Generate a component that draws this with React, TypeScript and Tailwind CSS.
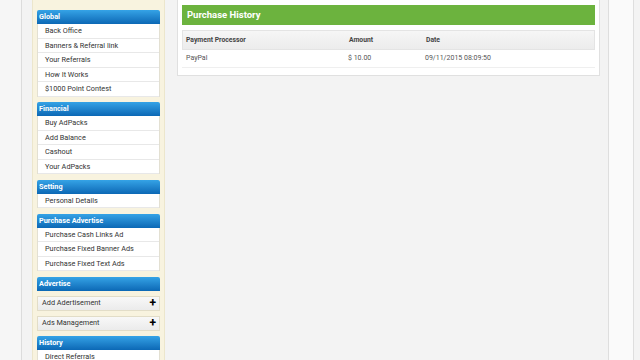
import React from 'react';

type Section = { title: string; items?: string[]; toggles?: string[] };

const sections: Section[] = [
  { title: 'Global', items: ['Back Office', 'Banners & Referral link', 'Your Referrals', 'How It Works', '$1000 Point Contest'] },
  { title: 'Financial', items: ['Buy AdPacks', 'Add Balance', 'Cashout', 'Your AdPacks'] },
  { title: 'Setting', items: ['Personal Details'] },
  { title: 'Purchase Advertise', items: ['Purchase Cash Links Ad', 'Purchase Fixed Banner Ads', 'Purchase Fixed Text Ads'] },
  { title: 'Advertise', toggles: ['Add Adertisement', 'Ads Management'] },
  { title: 'History', items: ['Direct Referrals', 'Purchase History'] },
];

function Header({ title }: { title: string }) {
  return (
    <div className="h-[14px] rounded-t-[2px] bg-gradient-to-b from-[#35a3e6] to-[#0b68b5] pl-[2px] text-[7.3px] font-bold leading-[14px] text-white">
      {title}
    </div>
  );
}

function SideSection({ s }: { s: Section }) {
  return (
    <div className="mb-[5.5px]">
      <Header title={s.title} />
      {s.items && (
        <div className="border-x border-[#e3e0d2] bg-white">
          {s.items.map((it) => (
            <div
              key={it}
              className="h-[14.5px] border-b border-[#e8e8e8] pl-[7px] text-[7.3px] leading-[13.5px] text-[#333]"
            >
              {it}
            </div>
          ))}
        </div>
      )}
      {s.toggles && (
        <div className="mt-[5px] flex flex-col gap-[5px]">
          {s.toggles.map((t) => (
            <div
              key={t}
              className="flex h-[15px] items-center justify-between border border-[#e2ddc8] bg-gradient-to-b from-[#f8f8f8] to-[#ebebeb] pl-[4px] pr-[3px] text-[7.3px] text-[#333]"
            >
              <span>{t}</span>
              <span className="text-[12px] font-bold leading-none text-black">+</span>
            </div>
          ))}
        </div>
      )}
    </div>
  );
}

export default function App() {
  return (
    <div
      className="flex h-[360px] w-[640px] overflow-hidden bg-[#f3f3f3]"
      style={{ fontFamily: 'Roboto, "Open Sans", Arial, sans-serif' }}
    >
      <div className="w-[22px] shrink-0 border-r border-[#dcdcdc] bg-[#f6f6f6]" />
      <div className="ml-[10px] w-[133px] shrink-0 border-x border-[#ece6cc] bg-[#f8f3df] px-[4px] pt-[10px]">
        {sections.map((s) => (
          <SideSection key={s.title} s={s} />
        ))}
      </div>
      <div className="ml-[12px] w-[423px] shrink-0">
        <div className="border border-t-0 border-[#e0e0e0] bg-white px-[4px] pb-[7px] pt-[5px]">
          <div className="h-[20px] bg-[#6cb33e] pl-[5px] text-[9.5px] font-bold leading-[20px] text-white">
            Purchase History
          </div>
          <div className="mt-[5px] border border-[#e4e4e4]">
            <div className="flex h-[18px] items-center bg-gradient-to-b from-[#f6f6f6] to-[#ececec] text-[6.8px] font-bold text-[#444]">
              <div className="w-[166px] pl-[3px]">Payment Processor</div>
              <div className="w-[77px]">Amount</div>
              <div>Date</div>
            </div>
          </div>
          <div className="flex h-[18px] items-center border-b border-[#efefef] text-[7px] text-[#555]">
            <div className="w-[166px] pl-[4px]">PayPal</div>
            <div className="w-[77px]">$ 10.00</div>
            <div>09/11/2015 08:09:50</div>
          </div>
        </div>
      </div>
      <div className="ml-[8px] w-[26px] shrink-0 border-x border-[#dedede] bg-[#fafafa]" />
    </div>
  );
}
